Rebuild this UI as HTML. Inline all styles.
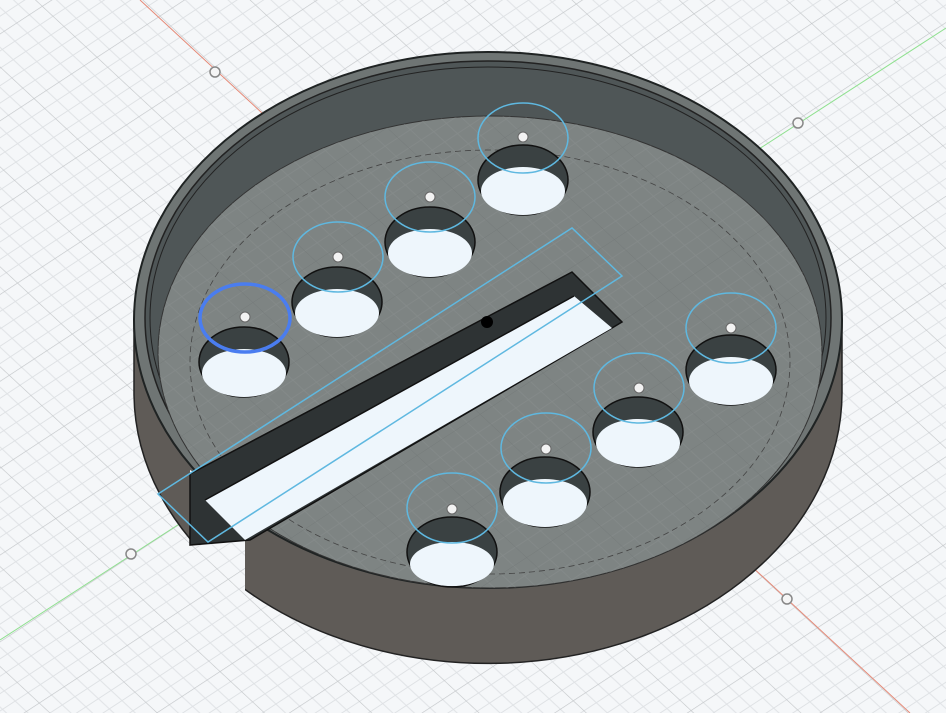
<!DOCTYPE html>
<html><head><meta charset="utf-8"><style>html,body{margin:0;padding:0;background:#f5f7f9;overflow:hidden}svg{display:block}</style></head>
<body>
<svg width="946" height="713" viewBox="0 0 946 713" xmlns="http://www.w3.org/2000/svg">
<defs>
<pattern id="g" width="75" height="75" patternUnits="userSpaceOnUse" patternTransform="matrix(0.73,0.68,0.84,-0.55,488,322)">
<path d="M15 0V75M30 0V75M45 0V75M60 0V75M0 15H75M0 30H75M0 45H75M0 60H75" stroke="#dfe2e5" stroke-width="1" fill="none"/>
<path d="M0 0H75M0 0V75" stroke="#c2c5c8" stroke-width="1.3" fill="none"/>
</pattern>
<pattern id="g2" width="75" height="75" patternUnits="userSpaceOnUse" patternTransform="matrix(0.73,0.68,0.84,-0.55,488,322)">
<path d="M15 0V75M30 0V75M45 0V75M60 0V75M0 15H75M0 30H75M0 45H75M0 60H75" stroke="#8e9393" stroke-width="0.8" fill="none"/>
<path d="M0 0H75M0 0V75" stroke="#6b7070" stroke-width="1" fill="none"/>
</pattern>
</defs>
<rect width="946" height="713" fill="#f5f7f9"/>
<rect width="946" height="713" fill="url(#g)"/>
<line x1="140" y1="0" x2="910" y2="713" stroke="#e58a78" stroke-width="1"/>
<line x1="0" y1="640" x2="946" y2="28" stroke="#8fe08f" stroke-width="1"/>
<path d="M134 320 L134 395 A350 268 0 0 0 842 390 L842 320 Z" fill="#5f5b57" stroke="#222" stroke-width="1.5"/>
<polygon points="190,470 245,500 245,595 190,545" fill="#f5f7f9"/>
<polygon points="190,470 245,500 245,595 190,545" fill="url(#g)"/>
<ellipse cx="488" cy="320" rx="354" ry="268" fill="#6f7574" stroke="#1f2323" stroke-width="2"/>
<ellipse cx="488" cy="318" rx="343" ry="257" fill="#4f5657" stroke="#222" stroke-width="1.5"/>
<ellipse cx="488" cy="318" rx="338" ry="251" fill="none" stroke="#222" stroke-width="1"/>
<ellipse cx="490" cy="352" rx="332" ry="236" fill="#7e8483" stroke="#333" stroke-width="1"/>
<ellipse cx="490" cy="352" rx="332" ry="236" fill="url(#g2)" opacity="0.45"/>
<ellipse cx="490" cy="362" rx="300" ry="212" fill="none" stroke="#444" stroke-width="0.8" stroke-dasharray="6 4"/>
<polygon points="190,474 572,272 622,322 612,328 250,540 190,545" fill="#2e3334" stroke="#111" stroke-width="1.5"/>
<polygon points="205,500 574,296 612,328 245,540" fill="#eef6fc"/>
<line x1="205" y1="500" x2="574" y2="296" stroke="#111" stroke-width="1.5"/>
<polygon points="158,494 572,228 622,276 208,542" fill="none" stroke="#5fb8e0" stroke-width="1.5"/>
<g fill="#3a4142" stroke="#111" stroke-width="1.5">
<ellipse cx="244" cy="362" rx="45" ry="35"/><ellipse cx="337" cy="302" rx="45" ry="35"/><ellipse cx="430" cy="242" rx="45" ry="35"/><ellipse cx="523" cy="180" rx="45" ry="35"/>
<ellipse cx="731" cy="370" rx="45" ry="35"/><ellipse cx="638" cy="432" rx="45" ry="35"/><ellipse cx="545" cy="492" rx="45" ry="35"/><ellipse cx="452" cy="552" rx="45" ry="35"/>
</g>
<g fill="#eef6fc">
<ellipse cx="244" cy="373" rx="42" ry="24"/><ellipse cx="337" cy="313" rx="42" ry="24"/><ellipse cx="430" cy="253" rx="42" ry="24"/><ellipse cx="523" cy="191" rx="42" ry="24"/>
<ellipse cx="731" cy="381" rx="42" ry="24"/><ellipse cx="638" cy="443" rx="42" ry="24"/><ellipse cx="545" cy="503" rx="42" ry="24"/><ellipse cx="452" cy="564" rx="42" ry="22"/>
</g>
<g fill="none" stroke="#5fb8e0" stroke-width="1.5">
<ellipse cx="338" cy="257" rx="45" ry="35"/><ellipse cx="430" cy="197" rx="45" ry="35"/><ellipse cx="523" cy="138" rx="45" ry="35"/>
<ellipse cx="731" cy="328" rx="45" ry="35"/><ellipse cx="639" cy="388" rx="45" ry="35"/><ellipse cx="546" cy="448" rx="45" ry="35"/><ellipse cx="452" cy="508" rx="45" ry="35"/>
</g>
<ellipse cx="245" cy="318" rx="45" ry="34" fill="none" stroke="#4a7df0" stroke-width="3.5"/>
<g fill="#f2f2f2" stroke="#666" stroke-width="1">
<circle cx="245" cy="317" r="5"/><circle cx="338" cy="257" r="5"/><circle cx="430" cy="197" r="5"/><circle cx="523" cy="137" r="5"/>
<circle cx="731" cy="328" r="5"/><circle cx="639" cy="388" r="5"/><circle cx="546" cy="449" r="5"/><circle cx="452" cy="509" r="5"/>
</g>
<circle cx="487" cy="322" r="6" fill="#000"/>
<g fill="#f5f5f5" stroke="#888" stroke-width="1.5">
<circle cx="215" cy="72" r="5"/><circle cx="798" cy="123" r="5"/><circle cx="131" cy="554" r="5"/><circle cx="787" cy="599" r="5"/>
</g>
</svg>
</body></html>
